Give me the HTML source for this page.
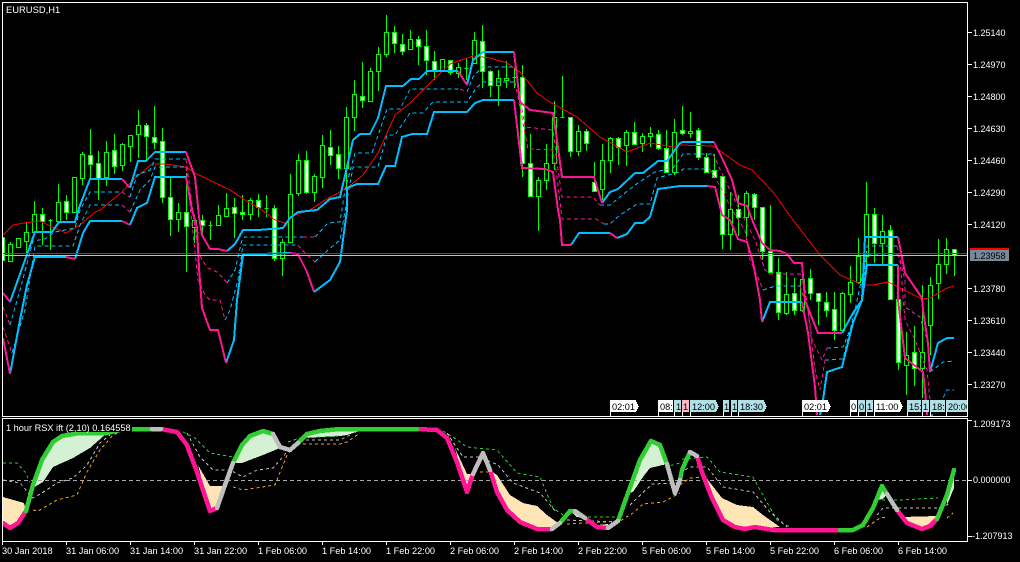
<!DOCTYPE html>
<html><head><meta charset="utf-8"><title>EURUSD,H1</title>
<style>html,body{margin:0;padding:0;background:#000;width:1020px;height:562px;overflow:hidden}svg{display:block}text{font-family:"Liberation Sans",sans-serif;fill:#fff;font-size:9px}.d{font-size:9.2px}.t{fill:#000;font-size:9.2px}</style></head>
<body>
<svg xmlns="http://www.w3.org/2000/svg" width="1020" height="562" viewBox="0 0 1020 562">
<defs><clipPath id="m"><rect x="3" y="3" width="964" height="413"/></clipPath><clipPath id="s"><rect x="3" y="419" width="964" height="122"/></clipPath></defs>
<rect width="1020" height="562" fill="#000"/>
<g clip-path="url(#m)" shape-rendering="crispEdges">
<path fill="none" stroke="#0f0" d="M2.5 237V260M10.5 242V261M18.5 238V247M26.5 223V253M34.5 201V232M42.5 208V245M50.5 219V250M58.5 184V221M66.5 195V220M74.5 177V212M82.5 152V185M90.5 129V178M98.5 151V200M106.5 141V186M114.5 134V174M122.5 143V171M130.5 135V162M138.5 110V158M146.5 123V160M154.5 106V149M162.5 128V203M170.5 178V236M178.5 203V232M186.5 173V272M194.5 215V243M202.5 215V234M210.5 221V240M218.5 205V225M226.5 193V216M234.5 198V238M242.5 195V220M250.5 198V220M258.5 194V217M266.5 195V217M274.5 205V261M282.5 239V276M290.5 174V243M298.5 154V196M306.5 151V194M314.5 174V202M322.5 135V188M330.5 130V165M338.5 146V179M346.5 107V190M354.5 80V131M362.5 62V108M370.5 68V101M378.5 47V91M386.5 15V57M394.5 26V53M402.5 34V55M410.5 30V50M418.5 36V65M426.5 30V75M434.5 51V80M442.5 59V71M450.5 60V75M458.5 63V78M466.5 58V80M474.5 32V63M482.5 25V88M490.5 70V97M498.5 70V106M506.5 61V88M514.5 68V88M522.5 65V177M530.5 134V197M538.5 177V231M546.5 144V190M554.5 101V170M562.5 76V118M570.5 117V157M578.5 125V156M586.5 129V151M594.5 162V191M602.5 144V200M610.5 137V173M618.5 137V165M626.5 130V166M634.5 122V145M642.5 133V152M650.5 127V147M658.5 130V150M666.5 130V173M674.5 119V175M682.5 106V135M690.5 112V138M698.5 128V160M706.5 153V173M714.5 154V178M722.5 176V249M730.5 192V250M738.5 195V236M746.5 191V237M754.5 193V220M762.5 207V260M770.5 205V272M778.5 258V320M786.5 272V315M794.5 278V315M802.5 277V312M810.5 269V300M818.5 293V325M826.5 292V317M834.5 292V340M842.5 292V332M850.5 266V303M858.5 238V284M866.5 182V270M874.5 208V263M882.5 215V265M890.5 225V300M898.5 299V370M906.5 332V395M914.5 326V386M922.5 285V398M930.5 277V355M938.5 239V299M946.5 238V274M954.5 249V276"/>
<path fill="#000" stroke="#0f0" d="M8.5 244.5h4V261.5h-4zM16.5 238.5h4V247.5h-4zM24.5 232.5h4V241.5h-4zM32.5 214.5h4V232.5h-4zM48.5 220.5h4V220.5h-4zM56.5 202.5h4V221.5h-4zM72.5 177.5h4V212.5h-4zM80.5 154.5h4V178.5h-4zM104.5 152.5h4V177.5h-4zM120.5 144.5h4V165.5h-4zM128.5 135.5h4V146.5h-4zM136.5 125.5h4V134.5h-4zM176.5 212.5h4V219.5h-4zM192.5 220.5h4V227.5h-4zM208.5 225.5h4V225.5h-4zM216.5 215.5h4V225.5h-4zM224.5 208.5h4V216.5h-4zM248.5 200.5h4V214.5h-4zM264.5 208.5h4V208.5h-4zM280.5 242.5h4V258.5h-4zM288.5 194.5h4V242.5h-4zM296.5 160.5h4V193.5h-4zM312.5 176.5h4V192.5h-4zM320.5 145.5h4V177.5h-4zM344.5 117.5h4V168.5h-4zM352.5 94.5h4V117.5h-4zM368.5 71.5h4V101.5h-4zM376.5 54.5h4V71.5h-4zM384.5 32.5h4V54.5h-4zM408.5 39.5h4V49.5h-4zM440.5 59.5h4V71.5h-4zM456.5 67.5h4V73.5h-4zM464.5 68.5h4V68.5h-4zM472.5 40.5h4V63.5h-4zM496.5 78.5h4V85.5h-4zM504.5 78.5h4V80.5h-4zM512.5 77.5h4V77.5h-4zM536.5 180.5h4V196.5h-4zM544.5 163.5h4V180.5h-4zM552.5 117.5h4V163.5h-4zM560.5 117.5h4V117.5h-4zM576.5 131.5h4V151.5h-4zM600.5 160.5h4V189.5h-4zM608.5 138.5h4V160.5h-4zM624.5 132.5h4V145.5h-4zM640.5 136.5h4V143.5h-4zM648.5 133.5h4V136.5h-4zM672.5 132.5h4V172.5h-4zM688.5 131.5h4V133.5h-4zM728.5 209.5h4V234.5h-4zM744.5 193.5h4V217.5h-4zM784.5 294.5h4V313.5h-4zM800.5 279.5h4V310.5h-4zM840.5 293.5h4V330.5h-4zM848.5 282.5h4V294.5h-4zM856.5 256.5h4V282.5h-4zM864.5 214.5h4V256.5h-4zM880.5 231.5h4V243.5h-4zM904.5 355.5h4V365.5h-4zM920.5 352.5h4V368.5h-4zM928.5 285.5h4V325.5h-4zM936.5 264.5h4V283.5h-4zM944.5 249.5h4V264.5h-4z"/>
<path fill="#fff" stroke="#0f0" d="M0.5 237.5h4V260.5h-4zM40.5 214.5h4V221.5h-4zM64.5 201.5h4V212.5h-4zM88.5 155.5h4V164.5h-4zM96.5 163.5h4V178.5h-4zM112.5 150.5h4V166.5h-4zM144.5 125.5h4V136.5h-4zM152.5 137.5h4V142.5h-4zM160.5 141.5h4V197.5h-4zM168.5 197.5h4V219.5h-4zM184.5 212.5h4V226.5h-4zM200.5 220.5h4V225.5h-4zM232.5 207.5h4V213.5h-4zM240.5 212.5h4V214.5h-4zM256.5 200.5h4V207.5h-4zM272.5 208.5h4V258.5h-4zM304.5 160.5h4V192.5h-4zM328.5 147.5h4V155.5h-4zM336.5 154.5h4V168.5h-4zM360.5 96.5h4V100.5h-4zM392.5 32.5h4V43.5h-4zM400.5 44.5h4V51.5h-4zM416.5 39.5h4V46.5h-4zM424.5 46.5h4V60.5h-4zM432.5 61.5h4V71.5h-4zM448.5 60.5h4V72.5h-4zM480.5 41.5h4V71.5h-4zM488.5 71.5h4V85.5h-4zM520.5 77.5h4V163.5h-4zM528.5 163.5h4V196.5h-4zM568.5 117.5h4V151.5h-4zM584.5 131.5h4V143.5h-4zM592.5 182.5h4V191.5h-4zM616.5 138.5h4V147.5h-4zM632.5 132.5h4V144.5h-4zM656.5 134.5h4V148.5h-4zM664.5 148.5h4V172.5h-4zM680.5 130.5h4V133.5h-4zM696.5 130.5h4V157.5h-4zM704.5 157.5h4V172.5h-4zM712.5 170.5h4V177.5h-4zM720.5 176.5h4V234.5h-4zM736.5 209.5h4V217.5h-4zM752.5 194.5h4V207.5h-4zM760.5 207.5h4V251.5h-4zM768.5 251.5h4V272.5h-4zM776.5 272.5h4V312.5h-4zM792.5 293.5h4V310.5h-4zM808.5 278.5h4V293.5h-4zM816.5 293.5h4V301.5h-4zM824.5 302.5h4V310.5h-4zM832.5 309.5h4V330.5h-4zM872.5 214.5h4V243.5h-4zM888.5 230.5h4V299.5h-4zM896.5 299.5h4V362.5h-4zM912.5 352.5h4V368.5h-4zM952.5 249.5h4V255.5h-4z"/>
</g>
<g clip-path="url(#m)" fill="none" shape-rendering="crispEdges">
<path stroke="#f00" stroke-width="1" d="M3 235L13 225 24 223 40 221 50 226 66 233 80 225 95 212 100 210 122 192 135 178 152 164 165 164 186 167 195 173 230 190 245 200 262 210 275 220 285 223 295 215 310 210 325 200 340 192 348 187 363 175 378 153 395 115 410 103 433 80 450 64 473 56 490 58 507 63 520 72 537 93 550 102 577 117 600 137 627 152 650 143 673 147 680 145 713 146 723 153 740 165 752 170 773 192 793 220 820 255 840 275 863 285 873 285 888 282 922 299 930 298 947 288 954 286"/>
<g stroke="#00bfff" stroke-dasharray="4 3">
<path d="M10 325L20 290 33 241 45 239 55 232 75 228 80 210 90 192 122 192"/>
<path d="M130 197L137 175 150 170 155 159 186 159"/>
<path d="M227 283L235 270 242 240 245 237 303 237"/>
<path d="M315 237L328 223 340 222 345 190 355 153 372 153 387 109 400 109 410 89 460 89"/>
<path d="M467 92L473 77 482 67 515 67"/>
<path d="M600 205L610 205 620 197 635 185 655 172 673 168 683 154 713 154"/>
<path d="M763 290L775 286 800 286"/>
<path d="M827 348L843 347 862 300 867 246 897 246"/>
<path d="M930 372L943 362 954 361"/>
<path d="M12 353L25 310 35 246 73 246 80 225 90 205 122 205"/>
<path d="M130 212L140 190 150 180 155 167 186 167"/>
<path d="M225 320L230 310 238 280 243 245 298 245"/>
<path d="M315 262L328 250 340 240 347 200 353 167 378 167 387 135 395 135 410 113 423 113 433 102 467 102 475 90 482 82 515 82"/>
<path d="M604 224L610 224 620 215 637 204 650 204 657 178 680 172 683 169 710 169"/>
<path d="M825 360L843 359 855 310 867 254 897 254"/>
<path d="M937 410L947 390 954 390"/>
</g>
<g stroke="#ff1493" stroke-dasharray="4 3">
<path d="M3 307L10 325"/>
<path d="M122 192L130 197"/>
<path d="M186 159L198 250 202 260 208 268 217 272 223 278 227 283"/>
<path d="M303 237L315 237"/>
<path d="M460 89L467 92"/>
<path d="M515 67L525 127 553 130 558 170 562 197 593 197 600 205"/>
<path d="M713 154L725 180 737 205 745 220 755 240 765 270 770 274 803 274 812 340 822 360 827 348"/>
<path d="M897 246L905 280 905 307 920 317 927 340 930 372"/>
<path d="M3 327L12 353"/>
<path d="M122 205L130 212"/>
<path d="M186 167L198 280 205 295 210 300 220 300 225 320"/>
<path d="M298 245L302 250 315 262"/>
<path d="M515 82L528 149 553 150 558 185 562 219 596 219 604 224"/>
<path d="M710 169L722 190 732 210 745 230 750 260 760 282 763 290"/>
<path d="M800 286L808 310 815 370 820 390 825 360"/>
<path d="M897 254L900 260 905 320 915 340 927 370 930 400 937 410"/>
</g>
<g stroke-width="2" stroke-linejoin="miter">
<g stroke="#00bfff">
<path d="M10 302L35 232 52 232 59 222 75 222 79 208 90 179 122 179"/>
<path d="M130 188L138 161 146 161 155 152 186 152"/>
<path d="M227 251L235 244 243 230 258 230 283 228 290 218 298 212 317 210 330 199 340 197 347 167 353 140 360 134 370 134 378 118 386 86 403 86 411 79 419 79 427 71 458 71"/>
<path d="M467 85L473 60 483 52 514 52"/>
<path d="M602 203L610 192 618 189 635 173 643 173 658 161 667 161 680 143 683 142 714 142"/>
<path d="M842 333L853 313 862 300 865 237 898 237"/>
<path d="M930 372L938 343 947 338 954 338"/>
<path d="M10 374L20 320 27 285 35 257 66 257"/>
<path d="M75 259L83 233 90 221 122 221"/>
<path d="M130 225L137 208 147 203 155 177 186 177"/>
<path d="M226 363L234 340 237 300 243 255 260 254 290 253"/>
<path d="M314 292L330 280 340 262 347 210 347 188 357 184 378 184 386 166 395 166 402 137 412 134 427 134 434 112 467 112 475 103 483 100 514 100"/>
<path d="M571 245L579 233 610 233"/>
<path d="M617 238L627 234 635 223 643 223 650 217 658 189 680 186 707 186"/>
<path d="M762 322L770 302 802 302"/>
<path d="M820 415L823 400 827 372 842 367 853 323 862 300 867 265 898 265"/>
<path d="M930 416L933 415"/>
</g>
<g stroke="#ff1493">
<path d="M3 293L10 302"/>
<path d="M122 179L130 188"/>
<path d="M186 152L195 177 199 217 202 235 210 249 218 249 227 251"/>
<path d="M458 71L467 85"/>
<path d="M514 52L520 102 530 110 553 113 557 140 562 177 594 177 602 203"/>
<path d="M714 142L723 160 732 180 738 203 747 206 753 222 762 243 770 250 780 251 787 254 794 263 802 263 805 300 810 313 818 333 842 333"/>
<path d="M898 237L905 273 922 298 923 310 928 343 930 372"/>
<path d="M3 338L10 374"/>
<path d="M66 257L75 259"/>
<path d="M122 221L130 225"/>
<path d="M186 177L192 210 197 227 199 268 202 308 210 330 218 330 226 363"/>
<path d="M290 253L298 254 307 272 314 292"/>
<path d="M514 100L522 168 545 169 553 172 558 210 560 220 562 245 571 245"/>
<path d="M610 233L617 238"/>
<path d="M707 186L715 187 722 215 730 220 738 239 747 242 753 262 760 300 762 322"/>
<path d="M802 302L808 333 815 387 817 415"/>
<path d="M898 265L898 300 905 358 923 372 925 390 927 415"/>
</g>
</g>
</g>
<g shape-rendering="crispEdges">
<path fill="none" stroke="#ff0000" d="M3 253.5H967"/>
<path fill="none" stroke="#c0c0c0" d="M3 255.5H967"/>
<g fill="#fff">
<path d="M658 400h15v12h-15zM850 400h7v12h-7z"/>
<path d="M610 400h26v2h1v2h1v2h1v1h-1v2h-1v2h-1v1h-26zM802 400h26v2h1v2h1v2h1v1h-1v2h-1v2h-1v1h-26zM874 400h26v2h1v2h1v2h1v1h-1v2h-1v2h-1v1h-26z"/>
</g>
<g fill="#b0e0e6">
<path d="M674 400h7v12h-7zM723 400h6v12h-6zM731 400h6v12h-6zM858 400h7v12h-7zM866 400h7v12h-7zM907 400h14v12h-14zM922 400h7v12h-7zM930 400h15v12h-15zM946 400h21v12h-21z"/>
<path d="M690 400h26v2h1v2h1v2h1v1h-1v2h-1v2h-1v1h-26zM738 400h26v2h1v2h1v2h1v1h-1v2h-1v2h-1v1h-26z"/>
</g>
<path fill="#ffb6c1" d="M682 400h7v12h-7z"/>
<path fill="#fff" d="M610 412h1v4h-1zM658 412h1v4h-1zM674 412h1v4h-1zM682 412h1v4h-1zM690 412h1v4h-1zM723 412h1v4h-1zM731 412h1v4h-1zM738 412h1v4h-1zM802 412h1v4h-1zM850 412h1v4h-1zM858 412h1v4h-1zM866 412h1v4h-1zM874 412h1v4h-1zM907 412h1v4h-1zM922 412h1v4h-1zM930 412h1v4h-1zM946 412h1v4h-1z"/>
</g>
<g>
<text class="t" x="612" y="410">02:01</text><text class="t" x="660" y="410">08:</text><text class="t" x="676" y="410">1</text><text class="t" x="683" y="410">1</text><text class="t" x="692" y="410">12:00</text><text class="t" x="724" y="410">1</text><text class="t" x="732" y="410">1</text><text class="t" x="740" y="410">18:30</text><text class="t" x="804" y="410">02:01</text><text class="t" x="851" y="410">0</text><text class="t" x="859" y="410">0</text><text class="t" x="867" y="410">1</text><text class="t" x="876" y="410">11:00</text><text class="t" x="909" y="410">15:</text><text class="t" x="923" y="410">1</text><text class="t" x="932" y="410">18:</text>
<svg x="946" y="398" width="21" height="16"><text class="t" x="2" y="12">20:00</text></svg>
</g>
<g clip-path="url(#s)" shape-rendering="crispEdges">
<path fill="#d4f1d4" d="M28 505L33 485 42 460 53 442 62 436 80 433 107 433 90 448 73 458 53 467 43 482 33 488zM233 463L242 445 250 436 263 431 273 434 280 448 263 455 242 463zM298 443L307 434 320 431 340 429 380 429 363 430 347 435 340 436 320 437 305 438zM570 511L575 511 585 518 577 517zM628 493L640 460 651 441 660 445 667 464 650 468 643 477 633 492zM882 486L887 494 883 499 877 500zM947 495L954 470 954 488 947 505z"/>
<path fill="#ffe4b5" d="M3 497L24 503 26 511 18 523 10 528 3 523zM198 465L210 486 223 486 217 508 210 511zM455 448L467 474 473 474 467 492zM490 470L497 475 510 495 523 503 537 506 547 515 558 523 552 529 537 529 520 522 507 510 497 492zM585 518L597 525 608 524 608 528 597 527zM703 475L708 480 722 498 737 505 753 507 763 515 780 527 745 529 735 527 723 520 712 498zM902 517L937 516 937 519 930 526 922 529 907 523z"/>
<path fill="none" stroke="#a9a9a9" stroke-dasharray="4 3" d="M3 480.5H967"/>
<g fill="none" stroke-dasharray="3 3">
<path stroke="#32cd32" d="M3 463L17 463 25 472 30 482M183 432L195 438 210 453 233 457M288 442L300 438 340 436M443 431L453 437 467 447 497 450 517 473 540 477 553 508 563 515M588 517L617 517M665 467L680 463M682 459L707 457 720 472 753 477 760 490 777 520 792 528M882 500L900 500 938 498"/>
<path stroke="#c0c0c0" d="M3 480L20 483 33 498 42 493 57 483 73 478 87 465 100 443 110 435M187 433L200 457 213 470 230 470 243 477 257 470 273 468 287 452M300 440L340 440 350 435M447 433L463 457 480 457 498 465 513 483 540 493 557 513M567 520L617 522M630 505L652 484 680 483M680 473L690 467 707 467 723 487 753 492 770 512 787 527M877 515L883 508 937 508 950 504"/>
<path stroke="#ffa500" d="M33 510L38 511 57 500 77 495 87 472 100 450 113 435 120 432M233 487L243 490 275 485 287 455 297 444 340 444 347 442 360 433M480 472L488 472M567 524L620 521 633 513 643 504 663 502 680 493M680 485L690 478 703 477M867 527L880 518 887 517M947 518L953 513"/>
</g>
<g fill="none" stroke-width="4.5" stroke-linejoin="round" stroke-linecap="round">
<path stroke="#ff1493" d="M3 523L10 528 18 523 26 511M161 429L177 432 187 445 197 472 210 511 217 508M417 429L437 430 447 438 457 462 467 492 473 474M490 470L497 492 507 510 520 522 537 529 552 529M585 518L597 527 608 528M697 456L703 475 712 498 723 520 735 527 745 529 755 527 773 530 840 530M897 510L907 523 922 529 930 526 937 519"/>
<path stroke="#32cd32" d="M26 511L33 485 42 460 53 442 62 436 80 433 107 433 120 430 133 429 152 429M233 463L242 445 250 436 263 431 273 434M298 443L307 434 320 431 340 429 417 429M560 523L570 511 575 511M618 521L628 493 640 460 651 441 660 445 667 464M680 480L682 470 690 452M840 530L853 530 863 525 873 508 882 486 887 494M937 519L947 495 954 470"/>
<path stroke="#bebebe" d="M152 429L161 429M217 508L225 485 233 463M273 434L280 447 290 450 298 443M473 474L483 453 490 470M552 529L560 523M575 511L585 518M608 528L618 521M667 464L675 493 680 480M690 452L697 456M887 494L897 510"/>
</g>
<rect x="3" y="419" width="129" height="13" fill="#000"/>
</g>
<g shape-rendering="crispEdges" fill="none" stroke="#fff">
<rect x="2.5" y="2.5" width="965" height="414"/>
<rect x="2.5" y="418.5" width="965" height="123"/>
<path d="M968 32.5h4M968 64.5h4M968 96.5h4M968 128.5h4M968 160.5h4M968 192.5h4M968 224.5h4M968 288.5h4M968 320.5h4M968 352.5h4M968 384.5h4M968 420.5h4M968 480.5h4M968 536.5h4"/>
<path d="M2.5 541v4M66.5 541v4M130.5 541v4M194.5 541v4M258.5 541v4M322.5 541v4M386.5 541v4M450.5 541v4M514.5 541v4M578.5 541v4M642.5 541v4M706.5 541v4M770.5 541v4M834.5 541v4M898.5 541v4"/>
</g>
<rect x="970" y="248" width="39" height="2" fill="#f00" shape-rendering="crispEdges"/>
<rect x="970" y="250" width="39" height="11" fill="#778899" shape-rendering="crispEdges"/>
<text x="6" y="13" style="font-size:9.4px">EURUSD,H1</text>
<text x="6" y="431" style="font-size:9.2px">1 hour RSX ift (2,10) 0.164558</text>
<g>
<text x="973" y="36">1.25140</text><text x="973" y="68">1.24970</text><text x="973" y="100">1.24800</text><text x="973" y="132">1.24630</text><text x="973" y="164">1.24460</text><text x="973" y="196">1.24290</text><text x="973" y="228">1.24120</text>
<text x="973" y="259" style="fill:#000">1.23958</text>
<text x="973" y="292">1.23780</text><text x="973" y="324">1.23610</text><text x="973" y="356">1.23440</text><text x="973" y="388">1.23270</text>
<text x="973" y="427">1.209173</text><text x="973" y="483">0.000000</text><text x="972" y="539">-1.207913</text>
</g>
<g>
<text class="d" x="2" y="554">30 Jan 2018</text><text class="d" x="66" y="554">31 Jan 06:00</text><text class="d" x="130" y="554">31 Jan 14:00</text><text class="d" x="194" y="554">31 Jan 22:00</text><text class="d" x="258" y="554">1 Feb 06:00</text><text class="d" x="322" y="554">1 Feb 14:00</text><text class="d" x="386" y="554">1 Feb 22:00</text><text class="d" x="450" y="554">2 Feb 06:00</text><text class="d" x="514" y="554">2 Feb 14:00</text><text class="d" x="578" y="554">2 Feb 22:00</text><text class="d" x="642" y="554">5 Feb 06:00</text><text class="d" x="706" y="554">5 Feb 14:00</text><text class="d" x="770" y="554">5 Feb 22:00</text><text class="d" x="834" y="554">6 Feb 06:00</text><text class="d" x="898" y="554">6 Feb 14:00</text>
</g>
</svg>
</body></html>
